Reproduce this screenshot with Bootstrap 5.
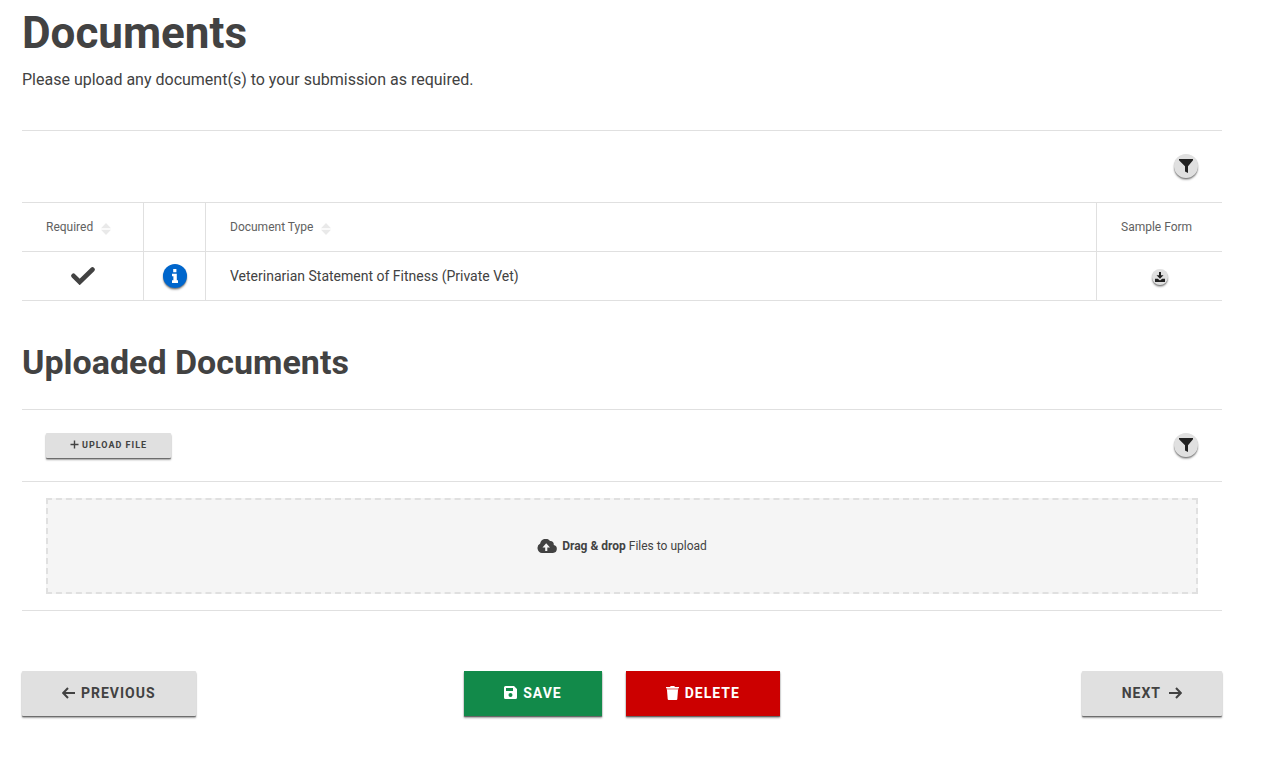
<!DOCTYPE html>
<html lang="en">
<head>
<meta charset="utf-8">
<meta name="viewport" content="width=device-width, initial-scale=1">
<title>Documents</title>
<link href="https://cdn.jsdelivr.net/npm/bootstrap@5.3.0/dist/css/bootstrap.min.css" rel="stylesheet">
<style>
  :root { --ink: #424242; --line: #e0e0e0; --raise: 0 2px 2px rgba(0,0,0,.35), 0 1px 1px rgba(0,0,0,.4); }
  body { font-family: Roboto, "Liberation Sans", sans-serif; color: var(--ink); background: #fff; }
  .page { padding: 5px 50px 40px 22px; }
  h1 { font-size: 44px; line-height: 56px; font-weight: 700; }
  h2 { font-size: 34px; line-height: 40px; font-weight: 700; padding: 41px 0 27px; }
  .intro { font-size: 16px; line-height: 24px; margin: 7px 0 38px; }
  .panel { border-top: 1px solid var(--line); }
  .toolbar { height: 72px; padding: 0 24px 1px; border-bottom: 1px solid var(--line); }
  .doc-table { border-collapse: separate; border-spacing: 0; font-size: 14px; line-height: 20px; }
  .doc-table th, .doc-table td { height: 49px; padding: 0 24px; border-bottom: 1px solid var(--line); border-right: 1px solid var(--line); vertical-align: middle; }
  .doc-table th:last-child, .doc-table td:last-child { border-right: 0; }
  .doc-table th { font-size: 12px; font-weight: 400; color: #616161; white-space: nowrap; }
  .doc-table svg { display: block; }
  .col-required { width: 122px; }
  .col-info { width: 62px; }
  .col-sample { width: 125px; }
  .sorter { color: inherit; gap: 8px; }
  .sorter svg { margin-top: 3px; }
  .round { width: 24px; height: 24px; padding: 0; border: 0; border-radius: 50%; background: var(--line); color: #212121; box-shadow: 0 2px 2px rgba(0,0,0,.3), 0 1px 1px rgba(0,0,0,.3); display: inline-flex; align-items: center; justify-content: center; }
  .round-info { background: #0066cc; color: #fff; }
  .round-sm { width: 16px; height: 16px; }
  .act { border: 0; border-radius: 1px; height: 45px; padding: 0 40px 2px; font-size: 14px; line-height: 20px; font-weight: 700; letter-spacing: 1px; text-transform: uppercase; box-shadow: var(--raise); display: inline-flex; align-items: center; gap: 6px; background: var(--line); color: var(--ink); }
  .act svg { flex: none; }
  .act-save { background: #128a4a; color: #fff; border-radius: 0; }
  .act-delete { background: #cc0000; color: #fff; border-radius: 0; }
  .act-next { gap: 8px; }
  .act-small { height: 25px; padding: 0 24px 1px; font-size: 9px; line-height: 12px; gap: 3px; }
  .drop-wrap { padding: 16px 24px; border-bottom: 1px solid var(--line); }
  .drop { height: 96px; border: 2px dashed var(--line); background: #f5f5f5; font-size: 12px; line-height: 16px; gap: 5px; }
  .drop b { font-weight: 700; }
  .actions { display: grid; grid-template-columns: 1fr auto 1fr; margin-top: 60px; }
</style>
</head>
<body>
<svg class="d-none" aria-hidden="true">
  <symbol id="funnel" viewBox="0 0 14 14"><path d="M0 0h14v1.200L9 7.200V14L6 12.400V7.200L0 1.200z" fill="currentColor"/></symbol>
  <symbol id="sort" viewBox="0 0 10 12"><path d="M5 0l5 5.300H0zM5 12l5-5.300H0z" fill="#e9e9e9"/></symbol>
</svg>
<main class="page">
  <h1 class="mb-0">Documents</h1>
  <p class="intro">Please upload any document(s) to your submission as required.</p>

  <section class="panel">
    <div class="toolbar d-flex align-items-center justify-content-end">
      <button type="button" class="round" aria-label="Filter"><svg width="14" height="14"><use href="#funnel"/></svg></button>
    </div>
    <table class="doc-table w-100">
      <thead>
        <tr>
          <th class="col-required"><button type="button" class="sorter d-flex align-items-center border-0 bg-transparent p-0">Required <svg width="10" height="12"><use href="#sort"/></svg></button></th>
          <th class="col-info"></th>
          <th><button type="button" class="sorter d-flex align-items-center border-0 bg-transparent p-0">Document Type <svg width="10" height="12"><use href="#sort"/></svg></button></th>
          <th class="col-sample">Sample Form</th>
        </tr>
      </thead>
      <tbody>
        <tr>
          <td class="px-0"><svg class="mx-auto" width="24" height="18" viewBox="0 0 24 18" role="img" aria-label="Required"><path d="M2.500 8.800l6.200 6.200L21.500 2.500" fill="none" stroke="#424242" stroke-width="4.600" stroke-linecap="round"/></svg></td>
          <td class="p-0 text-center"><button type="button" class="round round-info align-middle" aria-label="Information"><svg width="8" height="14" viewBox="0 0 8 14"><path d="M2.200 0h3.200v3.200H2.200zM1 4.800h4.800v6.500H7V14H1v-2.700h1.400V7.300H1z" fill="currentColor"/></svg></button></td>
          <td>Veterinarian Statement of Fitness (Private Vet)</td>
          <td class="p-0 text-center"><button type="button" class="round round-sm align-middle" aria-label="Download sample form"><svg width="10" height="10" viewBox="0 0 10 10"><path d="M4 0h2v3.200h2.500L5 6.700 1.500 3.200H4zM0 6.700h2.800L5 8.500l2.200-1.800H10V10H0z" fill="currentColor"/></svg></button></td>
        </tr>
      </tbody>
    </table>
  </section>

  <h2 class="m-0">Uploaded Documents</h2>

  <section class="panel">
    <div class="toolbar d-flex align-items-center justify-content-between">
      <button type="button" class="act act-small"><svg width="9" height="9" viewBox="0 0 9 9"><path d="M4.500 .5v8M.5 4.500h8" stroke="currentColor" stroke-width="1.400"/></svg>Upload File</button>
      <button type="button" class="round" aria-label="Filter"><svg width="14" height="14"><use href="#funnel"/></svg></button>
    </div>
    <div class="drop-wrap">
      <div class="drop d-flex align-items-center justify-content-center">
        <svg width="20" height="14" viewBox="0 0 20 14"><path d="M5 14a5 5 0 0 1-1.800-9.400A5.400 5.400 0 0 1 13 2.100a3.300 3.300 0 0 1 3.700 4A4 4 0 0 1 16 14z" fill="#424242"/><path d="M8.200 12V8.500H5.500L9.200 4.200 13 8.500h-2.700V12z" fill="#f5f5f5"/></svg>
        <span><b>Drag &amp; drop</b> Files to upload</span>
      </div>
    </div>
  </section>

  <div class="actions">
    <div><button type="button" class="act"><svg width="13" height="12" viewBox="0 0 13 12"><path d="M6 1L1.200 6 6 11M1.500 6H13" fill="none" stroke="currentColor" stroke-width="2"/></svg>Previous</button></div>
    <div class="d-flex gap-4">
      <button type="button" class="act act-save"><svg width="13" height="13" viewBox="0 0 13 13"><path fill-rule="evenodd" d="M1.500 0H10l3 3v8.500a1.500 1.500 0 0 1-1.500 1.500h-10A1.500 1.500 0 0 1 0 11.500v-10A1.500 1.500 0 0 1 1.500 0zM2 2v3h7V2zM6.500 7a2 2 0 1 0 0 4 2 2 0 0 0 0-4z" fill="currentColor"/></svg>Save</button>
      <button type="button" class="act act-delete"><svg width="13" height="14" viewBox="0 0 13 14"><path d="M0 1h4l.7-1h3.600L9 1h4v1.200H0z" fill="currentColor"/><path d="M.8 2.200h11.400V4H.8z" fill="currentColor" opacity=".7"/><path d="M1 4h11l-.7 9a1 1 0 0 1-1 1H2.700a1 1 0 0 1-1-1z" fill="currentColor"/></svg>Delete</button>
    </div>
    <div class="text-end"><button type="button" class="act act-next">Next <svg width="13" height="12" viewBox="0 0 13 12"><path d="M7 1l4.800 5L7 11M11.500 6H0" fill="none" stroke="currentColor" stroke-width="2"/></svg></button></div>
  </div>
</main>
<script src="https://cdn.jsdelivr.net/npm/bootstrap@5.3.0/dist/js/bootstrap.bundle.min.js"></script>
</body>
</html>
